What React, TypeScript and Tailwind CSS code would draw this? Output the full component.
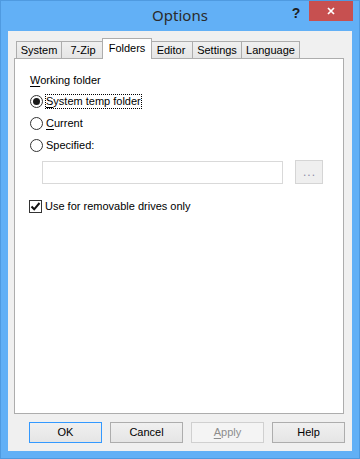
import React from 'react';

const font = { fontFamily: '"Liberation Sans", Arial, sans-serif' };

const tabs = [
  { label: 'System', w: 'w-[46px]' },
  { label: '7-Zip', w: 'w-[44px]' },
  { label: 'Folders', w: 'w-[50px]', active: true },
  { label: 'Editor', w: 'w-[44px]' },
  { label: 'Settings', w: 'w-[50px]' },
  { label: 'Language', w: 'w-[59px]' },
];

function Radio({ checked }: { checked?: boolean }) {
  return (
    <span className="flex h-[13px] w-[13px] shrink-0 items-center justify-center rounded-full border border-[#333] bg-white">
      {checked && <span className="h-[7px] w-[7px] rounded-full bg-[#1a1a1a]" />}
    </span>
  );
}

function RadioRow({ checked, focused, children }: { checked?: boolean; focused?: boolean; children: React.ReactNode }) {
  return (
    <div className="flex h-[16px] items-center">
      <Radio checked={checked} />
      <span
        className={
          'ml-[2px] border px-0 leading-[13px] ' +
          (focused ? 'border-dotted border-black' : 'border-transparent')
        }
      >
        {children}
      </span>
    </div>
  );
}

function DlgButton({ children, variant }: { children: React.ReactNode; variant?: 'default' | 'disabled' }) {
  const cls =
    variant === 'default'
      ? 'border-[#3399ff] bg-gradient-to-b from-[#f0f0f0] to-[#e5e5e5] text-black'
      : variant === 'disabled'
        ? 'border-[#d0d0d0] bg-[#f4f4f4] text-[#8d8d8d]'
        : 'border-[#adadad] bg-gradient-to-b from-[#f0f0f0] to-[#e5e5e5] text-black';
  return (
    <div className={'flex h-[21px] w-[73px] items-center justify-center border text-[11px] ' + cls}>
      {children}
    </div>
  );
}

export default function App() {
  return (
    <div
      className="flex h-[459px] w-[360px] flex-col border border-[#4f9ae0] bg-[#62b0f6] text-[11px] text-black"
      style={font}
    >
      {/* title bar */}
      <div className="grid h-[30px] shrink-0 grid-cols-[1fr_auto_1fr] items-start">
        <div />
        <div
          className="mt-[4px] text-[15px] leading-[20px] text-[#2b2b2b]"
          style={{ fontFamily: '"Noto Sans", "Open Sans", sans-serif' }}
        >
          Options
        </div>
        <div className="flex justify-end pr-[6px]">
          <span className="mt-[4px] w-[26px] text-center text-[14px] font-bold leading-[16px] text-[#1e1e1e]">?</span>
          <div className="flex h-[20px] w-[44px] items-center justify-center bg-[#c75050]">
            <svg width="10" height="10" viewBox="0 0 10 10">
              <path d="M2 2 L8 8 M8 2 L2 8" stroke="white" strokeWidth="1.7" />
            </svg>
          </div>
        </div>
      </div>

      {/* client area */}
      <div className="mx-[7px] mb-[7px] flex flex-1 flex-col bg-[#f0f0f0] pl-[6px] pt-[7px]">
        <div className="relative z-10 -mb-px flex h-[21px] items-end pl-[2px]">
          {tabs.map((t, i) =>
            t.active ? (
              <div
                key={t.label}
                className={`${t.w} relative z-10 -ml-[3px] -mr-[2px] flex h-[21px] items-start justify-center border border-b-0 border-[#adadad] bg-white pt-[3px] leading-[13px]`}
              >
                {t.label}
              </div>
            ) : (
              <div
                key={t.label}
                className={`${t.w} ${i > 0 ? '-ml-px' : ''} mb-px flex h-[17px] items-start justify-center border border-b-0 border-[#adadad] bg-gradient-to-b from-[#f0f0f0] to-[#e5e5e5] pt-[2px] leading-[13px]`}
              >
                {t.label}
              </div>
            ),
          )}
        </div>

        <div className="flex h-[356px] w-[330px] flex-col border border-[#adadad] bg-white pl-[15px]">
          <div className="mt-[15px] leading-[13px]">
            <span className="underline underline-offset-2">W</span>orking folder
          </div>
          <div className="mt-[6px] flex flex-col gap-[6px]">
            <RadioRow checked focused>
              <span className="underline underline-offset-2">S</span>ystem temp folder
            </RadioRow>
            <RadioRow>
              <span className="underline underline-offset-2">C</span>urrent
            </RadioRow>
            <RadioRow>Specified:</RadioRow>
          </div>

          <div className="ml-[12px] mt-[7px] flex items-center">
            <div className="h-[23px] w-[241px] border border-[#d9d9d9] bg-white" />
            <div className="ml-[12px] flex h-[24px] w-[28px] items-center justify-center border border-[#d5d5d5] bg-[#efefef] pb-[1px] pl-[1px] text-[12px] tracking-[1px] text-[#8c8ca8]">
              ...
            </div>
          </div>

          <div className="mt-[14px] flex h-[16px] items-center">
            <span className="-ml-px flex h-[13px] w-[13px] items-center justify-center border border-[#333] bg-white">
              <svg width="11" height="11" viewBox="0 0 11 11">
                <path d="M1.5 5.5 L4.2 8.3 L9.5 2" fill="none" stroke="#111" strokeWidth="2" />
              </svg>
            </span>
            <span className="ml-[3px] leading-[13px]">Use for removable drives only</span>
          </div>
        </div>

        <div className="mt-[8px] flex justify-end gap-[8px] pr-[7px]">
          <DlgButton variant="default">OK</DlgButton>
          <DlgButton>Cancel</DlgButton>
          <DlgButton variant="disabled">
            <span>
              <span className="underline underline-offset-2">A</span>pply
            </span>
          </DlgButton>
          <DlgButton>Help</DlgButton>
        </div>
      </div>
    </div>
  );
}
